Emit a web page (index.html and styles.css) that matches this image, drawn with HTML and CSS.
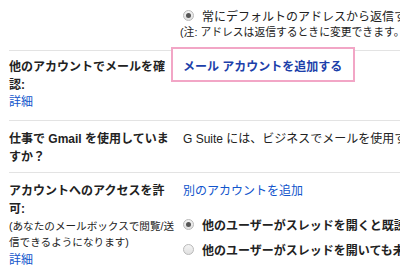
FILE: index.html
```html
<!DOCTYPE html>
<html lang="ja">
<head>
<meta charset="utf-8">
<link rel="stylesheet" href="styles.css">
</head>
<body>
<div class="page">
  <div class="row row-top">
    <div class="label"></div>
    <div class="value">
      <div class="opt"><span class="radio checked"></span><span class="opt-text plain">常にデフォルトのアドレスから返信する</span></div>
      <div class="note">(注: アドレスは返信するときに変更できます。詳細</div>
    </div>
  </div>
  <div class="row row-accounts">
    <div class="label">
      <div class="title">他のアカウントでメールを確認:</div>
      <a class="more">詳細</a>
    </div>
    <div class="value">
      <div class="highlight"></div>
      <a class="add-link strong">メール アカウントを追加する</a>
    </div>
  </div>
  <div class="row row-work">
    <div class="label">
      <div class="title">仕事で Gmail を使用していますか？</div>
    </div>
    <div class="value">
      <div class="text">G Suite には、ビジネスでメールを使用するための機能があります</div>
    </div>
  </div>
  <div class="row row-access">
    <div class="label">
      <div class="title">アカウントへのアクセスを許可:</div>
      <div class="small">(あなたのメールボックスで閲覧/送信できるようになります)</div>
      <a class="more">詳細</a>
    </div>
    <div class="value">
      <a class="add-link">別のアカウントを追加</a>
      <div class="opts">
        <div class="opt"><span class="radio checked"></span><span class="opt-text">他のユーザーがスレッドを開くと既読にする</span></div>
        <div class="opt"><span class="radio"></span><span class="opt-text">他のユーザーがスレッドを開いても未読のままにする</span></div>
      </div>
    </div>
  </div>
</div>
</body>
</html>
```

FILE: styles.css
```css
* { box-sizing: border-box; }
html, body { margin: 0; padding: 0; background: #fff; overflow: hidden; }
body {
  font-family: "Liberation Sans", "Noto Sans CJK JP", sans-serif;
  font-size: 12px;
  color: #222;
  width: 400px;
  height: 275px;
}
.page { padding-left: 9px; white-space: nowrap; }
.row { display: flex; border-top: 1px solid #e3e3e3; }
.row-top { border-top: none; height: 50px; padding-top: 6px; }
.label { width: 167px; flex: none; white-space: normal; }
.value { position: relative; padding-left: 7px; flex: none; }
.title { font-weight: bold; font-size: 12px; line-height: 18px; color: #222; }
.more { display: block; color: #15c; font-size: 12px; line-height: 17px; text-decoration: none; }
.small { font-size: 10.6px; line-height: 16px; color: #222; }
.opt { display: flex; align-items: center; height: 18px; }
.radio {
  width: 11px; height: 11px; border-radius: 50%;
  border: 1px solid #b9b9b9;
  background: linear-gradient(#f4f4f4, #e0e0e0);
  margin-right: 8px; flex: none; position: relative;
}
.radio.checked::after {
  content: ""; position: absolute; left: 2px; top: 2px; width: 5px; height: 5px;
  border-radius: 50%; background: #555;
}
.opt-text { font-weight: bold; font-size: 12px; }
.opt-text.plain { font-weight: normal; }
.note { font-size: 10.8px; line-height: 16px; margin-left: -3px; }
.row-accounts { padding-top: 7px; height: 70px; }
.add-link { display: block; color: #15c; font-size: 12px; line-height: 18px; text-decoration: none; }
.add-link.strong { font-weight: bold; color: #1c3faa; position: relative; z-index: 1; }
.highlight {
  position: absolute; left: -5px; top: -11px; width: 184px; height: 35px;
  border: 2px solid #f2a6c6; background: #fff; z-index: 0;
}
.row-work { padding-top: 9px; height: 52px; }
.text { font-size: 12px; line-height: 18px; }
.row-access { padding-top: 9px; }
.row-access .more { margin-top: 2px; }
.opts { margin-top: 12px; }
.opts .opt { height: 25px; }
```
